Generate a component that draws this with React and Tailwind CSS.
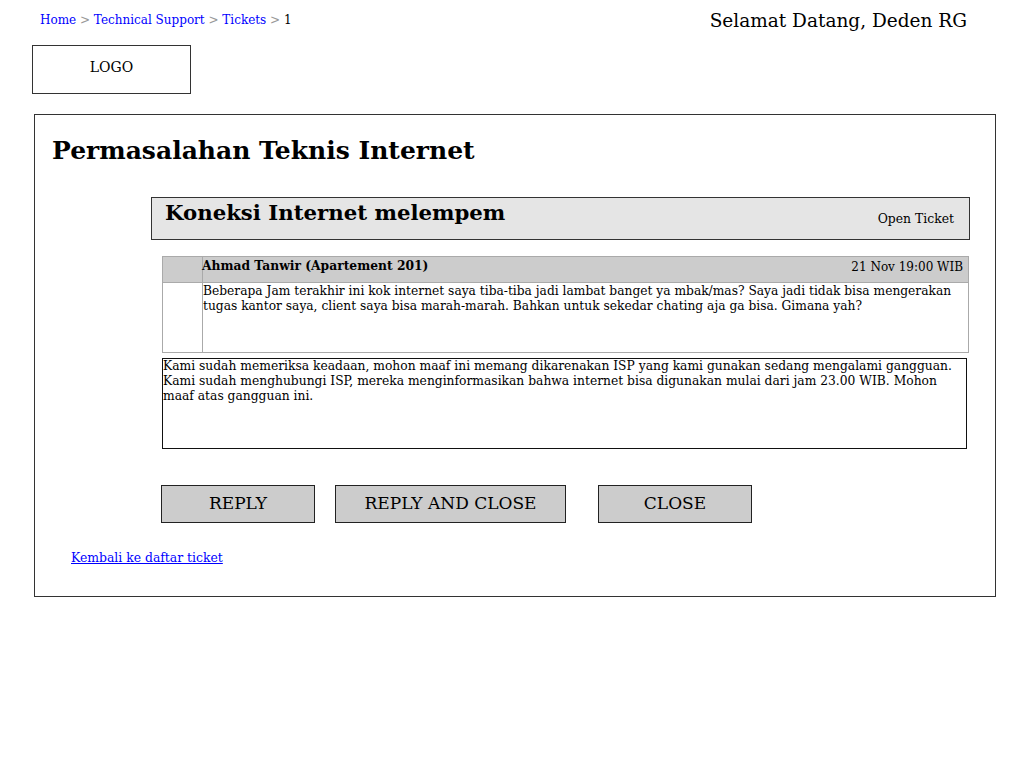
export default function App() {
  const f = { fontFamily: '"DejaVu Serif", serif' };
  return (
    <div className="relative w-[1024px] h-[768px] bg-white text-black" style={f}>
      <div className="flex justify-between items-start">
        <div className="ml-[40px] mt-[13px] h-[15px] overflow-hidden text-[12px] leading-[15px] whitespace-nowrap">
          <span className="text-[#0000ff]">Home</span>
          <span className="text-[#999999]"> &gt; </span>
          <span className="text-[#0000ff]">Technical Support</span>
          <span className="text-[#999999]"> &gt; </span>
          <span className="text-[#0000ff]">Tickets</span>
          <span className="text-[#999999]"> &gt; </span>
          <span>1</span>
        </div>
        <div className="mr-[57px] mt-[10px] text-[18.5px] leading-[22px] whitespace-nowrap">Selamat Datang, Deden RG</div>
      </div>
      <div className="ml-[32px] mt-[13px] w-[159px] h-[49px] border border-[#333333] flex justify-center pt-[13px] text-[14px] leading-[17px]">
        LOGO
      </div>
      <div className="ml-[34px] mt-[20px] w-[962px] h-[483px] border border-[#333333]">
        <h1 className="ml-[17px] mt-[20px] text-[25px] leading-[32px] font-bold">Permasalahan Teknis Internet</h1>
        <div className="ml-[116px] mt-[30px] w-[819px] h-[43px] bg-[#e5e5e5] border border-[#333333] flex justify-between items-start">
          <div className="ml-[13px] mt-[2px] text-[21.25px] leading-[26px] font-bold">Koneksi Internet melempem</div>
          <div className="mr-[15px] mt-[13px] text-[12.4px] leading-[16px]">Open Ticket</div>
        </div>
        <div className="ml-[127px] mt-[16px] w-[807px] h-[97px] border border-[#aaaaaa] flex flex-col">
          <div className="h-[26px] bg-[#cccccc] border-b border-[#aaaaaa] flex">
            <div className="w-[40px] border-r border-[#aaaaaa]"></div>
            <div className="flex-1 flex justify-between items-start pt-[1px] text-[12px] leading-[15px]">
              <span className="font-bold -ml-[1px] text-[12.3px]">Ahmad Tanwir (Apartement 201)</span>
              <span className="mr-[5px] mt-[2px]">21 Nov 19:00 WIB</span>
            </div>
          </div>
          <div className="flex-1 flex">
            <div className="w-[40px] border-r border-[#aaaaaa]"></div>
            <div className="flex-1 pt-[1px] text-[12.25px] leading-[15px]">
              Beberapa Jam terakhir ini kok internet saya tiba-tiba jadi lambat banget ya mbak/mas? Saya jadi tidak bisa mengerakan tugas kantor saya, client saya bisa marah-marah. Bahkan untuk sekedar chating aja ga bisa. Gimana yah?
            </div>
          </div>
        </div>
        <div className="ml-[127px] mt-[5px] w-[805px] h-[91px] border border-[#111111] text-[12.3px] leading-[15px] pt-[0px]">
          Kami sudah memeriksa keadaan, mohon maaf ini memang dikarenakan ISP yang kami gunakan sedang mengalami gangguan. Kami sudah menghubungi ISP, mereka menginformasikan bahwa internet bisa digunakan mulai dari jam 23.00 WIB. Mohon maaf atas gangguan ini.
        </div>
        <div className="ml-[126px] mt-[36px] flex">
          <div className="w-[154px] h-[38px] bg-[#cccccc] border border-[#222222] flex items-center justify-center text-[17px]">REPLY</div>
          <div className="ml-[20px] w-[231px] h-[38px] bg-[#cccccc] border border-[#222222] flex items-center justify-center text-[17px]">REPLY AND CLOSE</div>
          <div className="ml-[32px] w-[154px] h-[38px] bg-[#cccccc] border border-[#222222] flex items-center justify-center text-[17px]">CLOSE</div>
        </div>
        <div className="ml-[36px] mt-[27px] text-[12.4px] leading-[16px]">
          <span className="text-[#0000ff] underline">Kembali ke daftar ticket</span>
        </div>
      </div>
    </div>
  );
}
